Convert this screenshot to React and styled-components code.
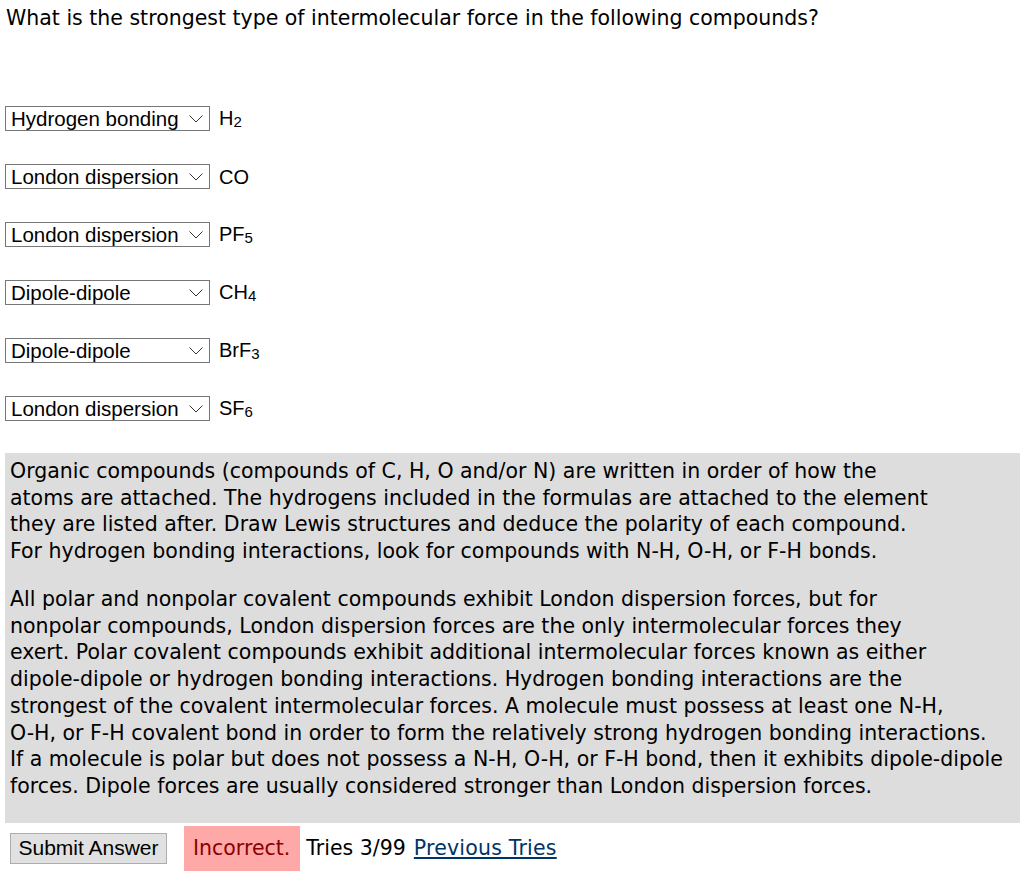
import styled, { createGlobalStyle } from 'styled-components'

const Global = createGlobalStyle`
  body {
    margin: 0;
    background: #fff;
    font-family: "DejaVu Sans", Verdana, sans-serif;
    color: #000;
  }
`

const questions = [
  { answer: 'Hydrogen bonding', formula: ['H', '2'] },
  { answer: 'London dispersion', formula: ['CO'] },
  { answer: 'London dispersion', formula: ['PF', '5'] },
  { answer: 'Dipole-dipole', formula: ['CH', '4'] },
  { answer: 'Dipole-dipole', formula: ['BrF', '3'] },
  { answer: 'London dispersion', formula: ['SF', '6'] },
]

const options = ['Hydrogen bonding', 'London dispersion', 'Dipole-dipole']

export default function App() {
  return (
    <>
      <Global />
      <Page>
        <Question>What is the strongest type of intermolecular force in the following compounds?</Question>

        <List>
          {questions.map((q, i) => (
            <Row key={i}>
              <SelectWrap>
                <Select defaultValue={q.answer}>
                  {options.map(o => <option key={o}>{o}</option>)}
                </Select>
                <Chevron viewBox="0 0 14 8">
                  <path d="M0.5 0.5 L7 7 L13.5 0.5" fill="none" stroke="#333" strokeWidth="1" />
                </Chevron>
              </SelectWrap>
              <Formula>
                {q.formula[0]}
                {q.formula[1] && <sub>{q.formula[1]}</sub>}
              </Formula>
            </Row>
          ))}
        </List>

        <Hint>
          <p>
            Organic compounds (compounds of C, H, O and/or N) are written in order of how the<br />
            atoms are attached. The hydrogens included in the formulas are attached to the element<br />
            they are listed after. Draw Lewis structures and deduce the polarity of each compound.<br />
            For hydrogen bonding interactions, look for compounds with N-H, O-H, or F-H bonds.
          </p>
          <p>
            All polar and nonpolar covalent compounds exhibit London dispersion forces, but for<br />
            nonpolar compounds, London dispersion forces are the only intermolecular forces they<br />
            exert. Polar covalent compounds exhibit additional intermolecular forces known as either<br />
            dipole-dipole or hydrogen bonding interactions. Hydrogen bonding interactions are the<br />
            strongest of the covalent intermolecular forces. A molecule must possess at least one N-H,<br />
            O-H, or F-H covalent bond in order to form the relatively strong hydrogen bonding interactions.<br />
            If a molecule is polar but does not possess a N-H, O-H, or F-H bond, then it exhibits dipole-dipole<br />
            forces. Dipole forces are usually considered stronger than London dispersion forces.
          </p>
        </Hint>

        <Footer>
          <SubmitButton type="button">Submit Answer</SubmitButton>
          <Result>Incorrect.</Result>
          <Tries>Tries 3/99</Tries>
          <TriesLink href="#">Previous Tries</TriesLink>
        </Footer>
      </Page>
    </>
  )
}

const Page = styled.div`
  padding: 5px 4px 0 5px;
  font-size: 20.5px;
  line-height: 26.75px;
  white-space: nowrap;
`

const Question = styled.div`
  padding-left: 1px;
`

const List = styled.div`
  display: flex;
  flex-direction: column;
  gap: 33px;
  margin-top: 74px;
`

const Row = styled.div`
  display: flex;
  align-items: center;
  gap: 9px;
  height: 25px;
`

const SelectWrap = styled.div`
  position: relative;
  width: 205px;
  height: 25px;
`

const Select = styled.select`
  appearance: none;
  width: 100%;
  height: 100%;
  margin: 0;
  padding: 0 0 0 5px;
  border: 1px solid #767676;
  border-radius: 0;
  background: #fff;
  color: #000;
  font-family: "Liberation Sans", Arial, sans-serif;
  font-size: 20.5px;
`

const Chevron = styled.svg`
  position: absolute;
  right: 7px;
  top: 9px;
  width: 14px;
  height: 8px;
  pointer-events: none;
`

const Formula = styled.span`
  font-family: "Liberation Sans", Arial, sans-serif;
  font-size: 20px;
  line-height: 25px;
  padding-top: 2px;
  sub {
    font-size: 15px;
    vertical-align: baseline;
    position: relative;
    top: 2px;
  }
`

const Hint = styled.div`
  margin-top: 32px;
  background: #dddddd;
  padding: 5px 5px 23px 5px;
  p {
    margin: 0;
  }
  p + p {
    margin-top: 21px;
  }
`

const Footer = styled.div`
  display: flex;
  align-items: center;
  margin-top: 3px;
`

const SubmitButton = styled.button`
  margin-left: 5px;
  width: 157px;
  height: 31px;
  padding: 0;
  background: #e1e1e1;
  border: 1px solid #adadad;
  border-radius: 0;
  font-family: "Liberation Sans", Arial, sans-serif;
  font-size: 21px;
  color: #000;
`

const Result = styled.span`
  margin-left: 17px;
  background: #ffa8a8;
  color: #8b0000;
  padding: 9px 10px 9px 9px;
  line-height: 27px;
`

const Tries = styled.span`
  margin-left: 6px;
`

const TriesLink = styled.a`
  margin-left: 8px;
  color: #003366;
  text-decoration: underline;
  letter-spacing: 0.2px;
`
